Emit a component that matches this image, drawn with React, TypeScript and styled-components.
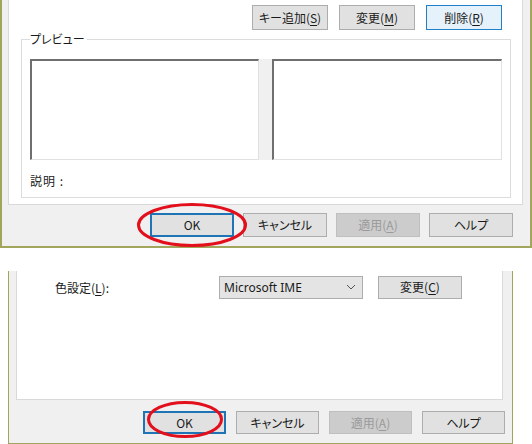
import React from "react";
import styled, { createGlobalStyle } from "styled-components";

const GlobalStyle = createGlobalStyle`
  html, body {
    margin: 0;
    padding: 0;
    background: #ffffff;
  }
  body {
    font-family: "Noto Sans CJK JP", "Noto Sans", sans-serif;
    font-size: 12px;
    font-feature-settings: "palt";
    color: #1a1a1a;
  }
`;

const Page = styled.div`
  width: 532px;
  height: 444px;
  display: flex;
  flex-direction: column;
  overflow: hidden;
`;

const Window = styled.div<{ $w: number; $h: number; $edge: number; $ml?: number; $mt?: number }>`
  position: relative;
  box-sizing: border-box;
  width: ${(p) => p.$w}px;
  height: ${(p) => p.$h}px;
  margin-left: ${(p) => p.$ml ?? 0}px;
  margin-top: ${(p) => p.$mt ?? 0}px;
  background: #f0f0f0;
  border: ${(p) => p.$edge}px solid #a2a65c;
  border-top: none;
  display: flex;
  flex-direction: column;
`;

const Panel = styled.div<{ $h: number; $ml: number; $mr: number }>`
  box-sizing: border-box;
  height: ${(p) => p.$h}px;
  margin: 0 ${(p) => p.$mr}px 0 ${(p) => p.$ml}px;
  background: #ffffff;
  border: 1px solid #d9d9d9;
  border-top: none;
  display: flex;
  flex-direction: column;
`;

const ButtonRow = styled.div<{ $mt: number; $pr: number; $gap: number }>`
  display: flex;
  justify-content: flex-end;
  margin-top: ${(p) => p.$mt}px;
  padding-right: ${(p) => p.$pr}px;
  gap: ${(p) => p.$gap}px;
`;

const Button = styled.div<{
  $w: number;
  $h: number;
  $variant?: "normal" | "hot" | "focus" | "disabled";
}>`
  box-sizing: border-box;
  width: ${(p) => p.$w}px;
  height: ${(p) => p.$h}px;
  display: flex;
  align-items: center;
  justify-content: center;
  font-size: 12px;
  line-height: 1;
  background: ${(p) =>
    p.$variant === "hot" ? "#e5f1fb" : p.$variant === "disabled" ? "#cccccc" : "#e1e1e1"};
  color: ${(p) => (p.$variant === "disabled" ? "#9a9a9a" : "#1a1a1a")};
  border: ${(p) =>
    p.$variant === "focus"
      ? "2px solid #1f74b6"
      : p.$variant === "hot"
      ? "1px solid #1f7fc8"
      : p.$variant === "disabled"
      ? "1px solid #bfbfbf"
      : "1px solid #adadad"};
  u {
    text-decoration: underline;
    text-underline-offset: 2px;
  }
`;

const GroupBox = styled.fieldset`
  box-sizing: border-box;
  margin: 1px 11px 0 12px;
  padding: 12px 7px 0 8px;
  height: 167px;
  border: 1px solid #dcdcdc;
  display: flex;
  flex-direction: column;
`;

const Legend = styled.legend`
  padding: 0 2px 0 0;
  margin-left: 0;
  font-size: 12px;
  line-height: 16px;
  color: #1a1a1a;
`;

const PreviewRow = styled.div`
  display: flex;
  height: 101px;
`;

const PreviewBox = styled.div<{ $w: number }>`
  box-sizing: border-box;
  width: ${(p) => p.$w}px;
  height: 101px;
  background: #ffffff;
  border-top: 2px solid #6f6f6f;
  border-left: 2px solid #6f6f6f;
  border-right: 1px solid #e1e1e1;
  border-bottom: 1px solid #e1e1e1;
`;

const Gutter = styled.div`
  width: 13px;
  height: 101px;
  background: #f0f0f0;
`;

const Caption = styled.div`
  margin-top: 13px;
  font-size: 12px;
  line-height: 16px;
  letter-spacing: 1px;
`;

const SettingRow = styled.div`
  display: flex;
  align-items: center;
  margin-top: 4px;
  padding-left: 38px;
  height: 24px;
`;

const Label = styled.div`
  width: 164px;
  font-size: 12px;
  u {
    text-decoration: underline;
    text-underline-offset: 2px;
  }
`;

const Combo = styled.div`
  box-sizing: border-box;
  width: 144px;
  height: 23px;
  background: #e4e4e4;
  border: 1px solid #adadad;
  display: flex;
  align-items: center;
  justify-content: space-between;
  padding: 0 6px 0 4px;
  font-family: "Noto Sans", "Open Sans", sans-serif;
  font-size: 12px;
  color: #1a1a1a;
  margin-right: 15px;
`;

const Mark = styled.svg<{ $l: number; $t: number; $w: number; $h: number }>`
  position: absolute;
  left: ${(p) => p.$l}px;
  top: ${(p) => p.$t}px;
  width: ${(p) => p.$w}px;
  height: ${(p) => p.$h}px;
  overflow: visible;
  pointer-events: none;
`;

const Ellipse: React.FC<{ l: number; t: number; w: number; h: number }> = ({ l, t, w, h }) => (
  <Mark $l={l} $t={t} $w={w} $h={h} viewBox={`0 0 ${w} ${h}`}>
    <ellipse
      cx={w / 2}
      cy={h / 2}
      rx={w / 2 - 1.5}
      ry={h / 2 - 1.5}
      fill="none"
      stroke="#e2101c"
      strokeWidth={3}
    />
  </Mark>
);

const Chevron = () => (
  <svg width="10" height="6" viewBox="0 0 10 6">
    <path d="M1 1 L5 5 L9 1" fill="none" stroke="#555" strokeWidth="1" />
  </svg>
);

const DialogButtons: React.FC<{ w: number; h: number }> = ({ w, h }) => (
  <>
    <Button $w={w} $h={h} $variant="focus">OK</Button>
    <Button $w={w} $h={h}>キャンセル</Button>
    <Button $w={w} $h={h} $variant="disabled">
      適用(<u>A</u>)
    </Button>
    <Button $w={w} $h={h}>ヘルプ</Button>
  </>
);

export default function App() {
  return (
    <Page>
      <GlobalStyle />
      <Window $w={532} $h={248} $edge={2}>
        <Panel $h={205} $ml={6} $mr={7}>
          <ButtonRow $mt={5} $pr={20} $gap={11}>
            <Button $w={76} $h={25}>
              キー追加(<u>S</u>)
            </Button>
            <Button $w={76} $h={25}>
              変更(<u>M</u>)
            </Button>
            <Button $w={76} $h={25} $variant="hot">
              削除(<u>R</u>)
            </Button>
          </ButtonRow>
          <GroupBox>
            <Legend>プレビュー</Legend>
            <PreviewRow>
              <PreviewBox $w={229} />
              <Gutter />
              <PreviewBox $w={230} />
            </PreviewRow>
            <Caption>説明 :</Caption>
          </GroupBox>
        </Panel>
        <ButtonRow $mt={8} $pr={17} $gap={9}>
          <DialogButtons w={84} h={24} />
        </ButtonRow>
        <Ellipse l={135} t={203} w={110} h={44} />
      </Window>

      <Window $w={505} $h={173} $edge={1} $ml={8} $mt={23}>
        <Panel $h={129} $ml={7} $mr={9}>
          <SettingRow>
            <Label>
              色設定(<u>L</u>):
            </Label>
            <Combo>
              <span>Microsoft IME</span>
              <Chevron />
            </Combo>
            <Button $w={84} $h={23}>
              変更(<u>C</u>)
            </Button>
          </SettingRow>
        </Panel>
        <ButtonRow $mt={11} $pr={7} $gap={10}>
          <DialogButtons w={83} h={23} />
        </ButtonRow>
        <Ellipse l={138} t={130} w={76} h={37} />
      </Window>
    </Page>
  );
}
